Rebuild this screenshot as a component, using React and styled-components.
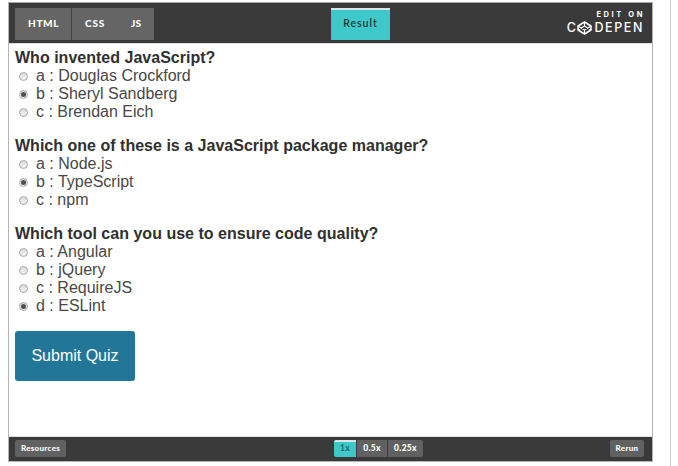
import React from "react";
import styled, { createGlobalStyle } from "styled-components";

const GlobalStyle = createGlobalStyle`
  * { box-sizing: border-box; }
  body { margin: 0; background: #fff; overflow: hidden; }
  button { border: 0; margin: 0; font: inherit; color: inherit; }
`;

const Page = styled.div`
  width: 671px;
  height: 466px;
  padding: 2px 0 0 8px;
  border-right: 1px solid #cfcfcf;
  font-family: "Liberation Sans", Arial, sans-serif;
`;

const Frame = styled.section`
  display: flex;
  flex-direction: column;
  width: 645px;
  height: 460px;
  border: 1px solid #b4b4b4;
  border-top-color: #a5a5a5;
`;

const Header = styled.header`
  display: grid;
  grid-template-columns: 316px 59px 1fr;
  align-items: start;
  flex: none;
  height: 40px;
  padding: 5px 9px 0 6px;
  background: #3a3a3a;
  font-family: Lato, sans-serif;
`;

const Tabs = styled.nav`
  display: flex;
  width: 139px;
  height: 32px;
  background: #656565;
`;

const Tab = styled.button`
  width: ${(p) => p.$width}px;
  padding: 0 0 2px 13px;
  border-right: ${(p) => (p.$divided ? "1px solid #414141" : "0")};
  background: transparent;
  color: #fff;
  font-size: 10px;
  font-weight: 900;
  letter-spacing: ${(p) => p.$spacing}px;
  text-align: left;
`;

const ResultTab = styled.button`
  width: 59px;
  height: 32px;
  padding: 0 0 4px;
  border-top: 2px solid #d5e8e8;
  background: #3fc8ca;
  color: #102c2d;
  font-size: 10.5px;
  font-weight: 500;
  letter-spacing: 1px;
`;

const Brand = styled.a`
  display: flex;
  flex-direction: column;
  align-items: flex-end;
  justify-self: end;
  padding-top: 2px;
  color: #fff;
  font-family: Inter, sans-serif;
`;

const EditOn = styled.span`
  height: 9px;
  margin-right: -2px;
  font-size: 7.5px;
  font-weight: 700;
  line-height: 10px;
  letter-spacing: 2.6px;
`;

const Wordmark = styled.span`
  display: flex;
  align-items: center;
  height: 17px;
  margin-right: -1px;
  font-size: 12.5px;
  font-weight: 500;
  line-height: 18px;
  letter-spacing: 1.6px;
`;

const LogoMark = styled.svg`
  width: 15px;
  height: 14px;
  margin: 0 2px 0 0;
`;

const Quiz = styled.main`
  flex: 1;
  padding: 5px 6px 0;
  border-top: 1px solid #dedede;
  border-bottom: 1px solid #e0e0e0;
  color: #303030;
`;

const QuestionBlock = styled.div`
  margin-bottom: 16px;
`;

const Question = styled.div`
  height: 18px;
  font-size: 16px;
  font-weight: 700;
  line-height: 18px;
  letter-spacing: 0.015px;
  white-space: nowrap;
`;

const Option = styled.label`
  display: flex;
  align-items: center;
  height: 18px;
  padding-left: 4px;
  color: #484848;
  font-size: 16px;
  line-height: 18px;
  white-space: nowrap;
`;

const Radio = styled.input`
  appearance: none;
  display: grid;
  place-items: center;
  flex: none;
  width: 9px;
  height: 9px;
  margin: 0 8px 0 0;
  border: 1px solid #a8a8a8;
  border-radius: 50%;
  background: linear-gradient(#dcdcdc, #f1f1f1);

  &:checked::before {
    content: "";
    width: 5px;
    height: 5px;
    border-radius: 50%;
    background: #505050;
  }
`;

const Submit = styled.button`
  display: block;
  width: 120px;
  height: 50px;
  padding: 0;
  border-radius: 3px;
  background: #279;
  color: #fff;
  font-size: 16px;
`;

const Footer = styled.footer`
  display: grid;
  grid-template-columns: 319px 90px 1fr;
  align-items: start;
  flex: none;
  height: 24px;
  padding: 3px 8px 0 6px;
  background: #3a3a3a;
  font-family: Lato, sans-serif;
`;

const ZoomGroup = styled.div`
  display: flex;
  gap: 1px;
`;

const FooterButton = styled.button`
  width: ${(p) => p.$width}px;
  height: 17px;
  padding: 0;
  justify-self: ${(p) => p.$align || "start"};
  border-top: ${(p) => (p.$active ? "2px solid #d5e8e8" : "0")};
  border-radius: ${(p) => p.$radius || "0"};
  background: ${(p) => (p.$active ? "#3fc8ca" : "#616161")};
  color: ${(p) => (p.$active ? "#206d70" : "#fff")};
  font-size: ${(p) => p.$size || 8}px;
  font-weight: 900;
  line-height: ${(p) => (p.$active ? 12 : 16)}px;
  padding-bottom: ${(p) => (p.$active ? 3 : 1)}px;
  letter-spacing: 0.3px;
`;

const questions = [
  { text: "Who invented JavaScript?", options: ["Douglas Crockford", "Sheryl Sandberg", "Brendan Eich"], selected: 1 },
  { text: "Which one of these is a JavaScript package manager?", options: ["Node.js", "TypeScript", "npm"], selected: 1 },
  { text: "Which tool can you use to ensure code quality?", options: ["Angular", "jQuery", "RequireJS", "ESLint"], selected: 3 },
];

export default function App() {
  return (
    <Page>
      <GlobalStyle />
      <Frame>
        <Header>
          <Tabs>
            <Tab $width={57} $spacing={0.65} $divided>HTML</Tab>
            <Tab $width={46} $spacing={0.8}>CSS</Tab>
            <Tab $width={36} $spacing={0.1}>JS</Tab>
          </Tabs>
          <ResultTab>Result</ResultTab>
          <Brand>
            <EditOn>EDIT ON</EditOn>
            <Wordmark>
              C
              <LogoMark viewBox="0 0 15 14" fill="none" stroke="#fff" strokeWidth="1.5" strokeLinejoin="round">
                <path d="M7.5 1 14 5v4l-6.5 4L1 9V5z" />
                <path d="M1 5l6.5 4L14 5M1 9l6.5-4L14 9M7.5 1v4M7.5 9v4" strokeWidth="1.2" />
              </LogoMark>
              DEPEN
            </Wordmark>
          </Brand>
        </Header>
        <Quiz>
          {questions.map((q, n) => (
            <QuestionBlock key={q.text}>
              <Question>{q.text}</Question>
              {q.options.map((option, i) => (
                <Option key={option}>
                  <Radio type="radio" name={`question${n}`} defaultChecked={i === q.selected} />
                  {"abcd"[i]} : {option}
                </Option>
              ))}
            </QuestionBlock>
          ))}
          <Submit>Submit Quiz</Submit>
        </Quiz>
        <Footer>
          <FooterButton $width={51} $radius="2px">Resources</FooterButton>
          <ZoomGroup>
            <FooterButton $width={22} $size={8.5} $radius="2px 0 0 2px" $active>1x</FooterButton>
            <FooterButton $width={30} $size={8.5}>0.5x</FooterButton>
            <FooterButton $width={35} $size={8.5} $radius="0 2px 2px 0">0.25x</FooterButton>
          </ZoomGroup>
          <FooterButton $width={34} $radius="2px" $align="end">Rerun</FooterButton>
        </Footer>
      </Frame>
    </Page>
  );
}
